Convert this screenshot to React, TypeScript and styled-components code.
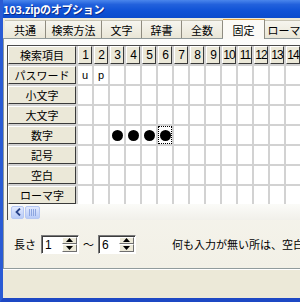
import styled, { createGlobalStyle } from "styled-components";

const GlobalStyle = createGlobalStyle`
  html, body {
    margin: 0;
    padding: 0;
    overflow: hidden;
    background: #ece9d8;
  }
`;

const JP = `"Noto Sans CJK JP", "Noto Sans", sans-serif`;
const LATIN = `"Liberation Sans", Arial, sans-serif`;

const Window = styled.div`
  width: 330px;
  height: 302px;
  display: flex;
  flex-direction: column;
  box-sizing: border-box;
  border-left: 3px solid #2a5bd4;
  border-bottom: 4px solid #1d48c4;
  background: #ece9d8;
  overflow: hidden;
`;

const TitleBar = styled.div`
  height: 18px;
  flex: none;
  display: flex;
  align-items: center;
  margin-left: -3px;
  padding-left: 3px;
  background: linear-gradient(#4a86ec 0%, #2261dc 25%, #0f52d6 60%, #0b4bcc 100%);
  color: #fff;
  font-family: ${JP};
  font-weight: bold;
  font-size: 11px;
  letter-spacing: -0.3px;
  text-shadow: 1px 1px 0 #0a2a8a;
`;

const TabStrip = styled.div`
  height: 19px;
  flex: none;
  display: flex;
  align-items: flex-end;
  padding-left: 2px;
  margin-top: 1px;
`;

const Tab = styled.div<{ $w: number; $active?: boolean }>`
  width: ${(p) => p.$w}px;
  flex: none;
  height: ${(p) => (p.$active ? 20 : 18)}px;
  box-sizing: border-box;
  display: flex;
  align-items: center;
  justify-content: center;
  font-family: ${JP};
  font-size: 11px;
  color: #000;
  border-top: 1px solid ${(p) => (p.$active ? "#e3a13c" : "#c6c3b4")};
  border-right: 1px solid #8f8c80;
  background: ${(p) =>
    p.$active ? "#fbfaf6" : "linear-gradient(#f6f5ef, #e9e6d6)"};
  margin-bottom: ${(p) => (p.$active ? -1 : 0)}px;
  position: relative;
  z-index: ${(p) => (p.$active ? 1 : 0)};
`;

const Panel = styled.div`
  height: 231px;
  flex: none;
  box-sizing: border-box;
  border: 1px solid #919b9c;
  border-right: none;
  background: linear-gradient(#fcfcfa, #f2f0e6);
  display: flex;
  flex-direction: column;
  padding: 6px 0 0 3px;
`;

const GridFrame = styled.div`
  border-top: 1px solid #4a4a4a;
  border-left: 1px solid #4a4a4a;
  background: #fff;
  display: flex;
  flex-direction: column;
`;

const GridBody = styled.div`
  height: 158px;
  overflow: hidden;
  display: grid;
  grid-template-columns: 68px repeat(15, 14px);
  grid-auto-rows: 18px;
  gap: 2px;
  background: #d2d2d2;
  width: max-content;
`;

const FixedCell = styled.div`
  box-sizing: border-box;
  display: flex;
  align-items: center;
  justify-content: center;
  background: #ebe8d8;
  border-top: 1px solid #fff;
  border-left: 1px solid #fff;
  border-right: 1px solid #3a3a3a;
  border-bottom: 1px solid #3a3a3a;
  font-family: ${JP};
  font-size: 11px;
  color: #000;
  white-space: nowrap;
`;

const NumCell = styled(FixedCell)`
  font-family: ${LATIN};
  font-size: 12px;
  letter-spacing: -1px;
`;

const DataCell = styled.div<{ $focus?: boolean }>`
  box-sizing: border-box;
  background: #fff;
  display: flex;
  align-items: center;
  justify-content: center;
  font-family: ${LATIN};
  font-size: 11px;
  color: #000;
  border: 1px dotted ${(p) => (p.$focus ? "#000" : "transparent")};
`;

const Dot = styled.span`
  width: 11px;
  height: 11px;
  border-radius: 50%;
  background: #000;
`;

const ScrollBar = styled.div`
  height: 16px;
  display: flex;
  align-items: center;
  gap: 1px;
  padding-left: 3px;
  background: linear-gradient(#fbfbf8, #f1f0ea);
`;

const ScrollButton = styled.div`
  width: 13px;
  height: 13px;
  box-sizing: border-box;
  border: 1px solid #b6c8f3;
  border-radius: 2px;
  background: linear-gradient(#e2eafe, #b8cbf7);
  display: flex;
  align-items: center;
  justify-content: center;
`;

const Thumb = styled(ScrollButton)`
  width: 15px;
  gap: 1px;
`;

const Grip = styled.span`
  width: 1px;
  height: 7px;
  background: #8da6e0;
`;

const Controls = styled.div`
  flex: 1;
  display: flex;
  align-items: center;
  padding-left: 4px;
  font-family: ${JP};
  font-size: 11px;
  color: #000;
`;

const Label = styled.span<{ $ml?: number }>`
  flex: none;
  margin-left: ${(p) => p.$ml ?? 0}px;
  white-space: nowrap;
`;

const Spin = styled.div<{ $ml: number }>`
  flex: none;
  margin-left: ${(p) => p.$ml}px;
  width: 38px;
  height: 19px;
  box-sizing: border-box;
  display: flex;
  border: 1px solid;
  border-color: #7b7b7b #fff #fff #7b7b7b;
  box-shadow: inset 1px 1px 0 #3c3c3c;
  background: #fff;
`;

const SpinValue = styled.span`
  flex: 1;
  padding: 2px 0 0 3px;
  font-family: ${LATIN};
  font-size: 12px;
`;

const SpinButtons = styled.div`
  width: 15px;
  flex: none;
  display: flex;
  flex-direction: column;
  margin: 1px 1px 1px 0;
`;

const SpinHalf = styled.div`
  flex: 1;
  display: flex;
  align-items: center;
  justify-content: center;
  background: #ece9d8;
  border: 1px solid;
  border-color: #fff #6f6f6f #6f6f6f #fff;
`;

const Tilde = styled.span`
  flex: none;
  margin-left: 4px;
  width: 11px;
`;

const Footer = styled.div`
  flex: 1;
  background: #ece9d8;
  border-top: 1px solid #fff;
`;

const tabs = [
  { label: "共通", w: 41 },
  { label: "検索方法", w: 56 },
  { label: "文字", w: 40 },
  { label: "辞書", w: 40 },
  { label: "全数", w: 41 },
  { label: "固定", w: 42, active: true },
  { label: "ローマ字", w: 50 },
];

const rowLabels = ["パスワード", "小文字", "大文字", "数字", "記号", "空白", "ローマ字"];
const COLS = 15;

function cellContent(row: number, col: number) {
  if (row === 0 && col === 1) return "u";
  if (row === 0 && col === 2) return "p";
  if (row === 3 && col >= 3 && col <= 6) return <Dot />;
  return null;
}

function Arrow({ up }: { up: boolean }) {
  return (
    <svg width="7" height="4" viewBox="0 0 7 4">
      <path d={up ? "M0 4 L3.5 0 L7 4 Z" : "M0 0 L3.5 4 L7 0 Z"} fill="#000" />
    </svg>
  );
}

function SpinBox({ value, ml }: { value: string; ml: number }) {
  return (
    <Spin $ml={ml}>
      <SpinValue>{value}</SpinValue>
      <SpinButtons>
        <SpinHalf>
          <Arrow up />
        </SpinHalf>
        <SpinHalf>
          <Arrow up={false} />
        </SpinHalf>
      </SpinButtons>
    </Spin>
  );
}

export default function App() {
  const cols = Array.from({ length: COLS }, (_, i) => i + 1);
  return (
    <>
      <GlobalStyle />
      <Window>
        <TitleBar>103.zipのオプション</TitleBar>
        <TabStrip>
          {tabs.map((t) => (
            <Tab key={t.label} $w={t.w} $active={t.active}>
              {t.label}
            </Tab>
          ))}
        </TabStrip>
        <Panel>
          <GridFrame>
            <GridBody>
              <FixedCell>検索項目</FixedCell>
              {cols.map((c) => (
                <NumCell key={c}>{c}</NumCell>
              ))}
              {rowLabels.map((label, r) => [
                <FixedCell key={label}>{label}</FixedCell>,
                ...cols.map((c) => (
                  <DataCell key={`${r}-${c}`} $focus={r === 3 && c === 6}>
                    {cellContent(r, c)}
                  </DataCell>
                )),
              ])}
            </GridBody>
            <ScrollBar>
              <ScrollButton>
                <svg width="6" height="8" viewBox="0 0 6 8">
                  <path d="M5 0.5 L1.5 4 L5 7.5" stroke="#29448a" strokeWidth="1.8" fill="none" />
                </svg>
              </ScrollButton>
              <Thumb>
                <Grip />
                <Grip />
                <Grip />
                <Grip />
              </Thumb>
            </ScrollBar>
          </GridFrame>
          <Controls>
            <Label $ml={3}>長さ</Label>
            <SpinBox value="1" ml={5} />
            <Tilde>～</Tilde>
            <SpinBox value="6" ml={4} />
            <Label $ml={36}>何も入力が無い所は、空白として扱います</Label>
          </Controls>
        </Panel>
        <Footer />
      </Window>
    </>
  );
}
